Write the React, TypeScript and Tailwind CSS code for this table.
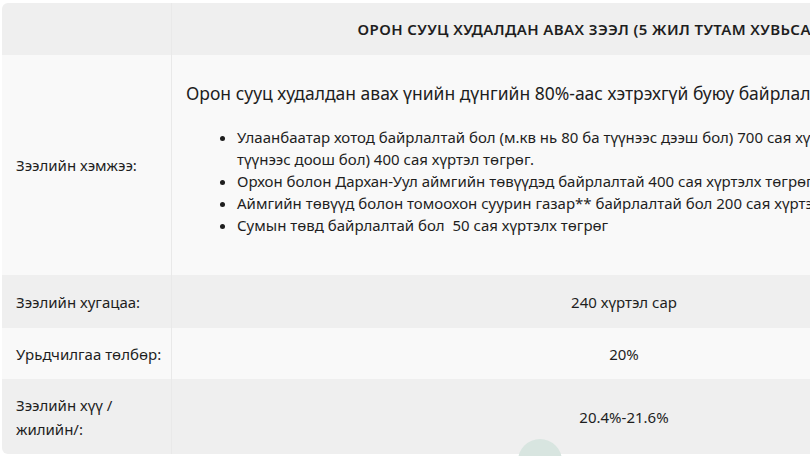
import React from "react";

const font = { fontFamily: '"Noto Sans", "Open Sans", sans-serif' };

export default function App() {
  return (
    <div className="relative w-[810px] h-[456px] overflow-hidden bg-white" style={font}>
      <div className="pl-[2px] pt-[3px]">
        <table className="w-[1074px] border-separate border-spacing-0 rounded-[6px] overflow-hidden text-[15px] text-[#1e1e1e] table-fixed">
          <colgroup>
            <col className="w-[170px]" />
            <col />
          </colgroup>
          <thead>
            <tr className="bg-[#efefef]">
              <th className="h-[52px] border-r border-[#e9e9e9]"></th>
              <th className="h-[52px] px-[14px] text-center font-semibold text-[15px] tracking-[0.4px] whitespace-nowrap">
                ОРОН СУУЦ ХУДАЛДАН АВАХ ЗЭЭЛ (5 ЖИЛ ТУТАМ ХУВЬСАХ ХҮҮТЭЙ)
              </th>
            </tr>
          </thead>
          <tbody>
            <tr className="bg-[#f9f9f9]">
              <td className="h-[220px] pl-[14px] pr-[6px] leading-6 border-r border-[#e9e9e9] align-middle whitespace-nowrap">
                Зээлийн хэмжээ:
              </td>
              <td className="h-[220px] px-[14px] align-top">
                <p className="mt-[26px] text-[17.5px] leading-6 whitespace-nowrap">
                  Орон сууц худалдан авах үнийн дүнгийн 80%-аас хэтрэхгүй буюу байрлалаас хамааран:
                </p>
                <ul className="mt-[21px] pl-[51px] list-disc leading-[22px] whitespace-nowrap">
                  <li>
                    Улаанбаатар хотод байрлалтай бол (м.кв нь 80 ба түүнээс дээш бол) 700 сая хүртэл, (м.кв нь 80 ба
                    <br />
                    түүнээс доош бол) 400 сая хүртэл төгрөг.
                  </li>
                  <li>Орхон болон Дархан-Уул аймгийн төвүүдэд байрлалтай 400 сая хүртэлх төгрөг</li>
                  <li>Аймгийн төвүүд болон томоохон суурин газар** байрлалтай бол 200 сая хүртэлх төгрөг</li>
                  <li>Сумын төвд байрлалтай бол&nbsp; 50 сая хүртэлх төгрөг</li>
                </ul>
              </td>
            </tr>
            <tr className="bg-[#efefef]">
              <td className="h-[53px] pl-[14px] pr-[6px] leading-6 border-r border-[#e9e9e9] whitespace-nowrap">Зээлийн хугацаа:</td>
              <td className="h-[53px] px-[14px] leading-6 text-center">240 хүртэл сар</td>
            </tr>
            <tr className="bg-[#f9f9f9]">
              <td className="h-[51px] pl-[14px] pr-[6px] leading-6 border-r border-[#e9e9e9] whitespace-nowrap">Урьдчилгаа төлбөр:</td>
              <td className="h-[51px] px-[14px] leading-6 text-center">20%</td>
            </tr>
            <tr className="bg-[#efefef]">
              <td className="h-[75px] pl-[14px] pr-[6px] leading-6 border-r border-[#e9e9e9]">
                Зээлийн хүү /
                <br />
                жилийн/:
              </td>
              <td className="h-[75px] px-[14px] leading-6 text-center">20.4%-21.6%</td>
            </tr>
          </tbody>
        </table>
      </div>
      <div className="absolute left-[518px] top-[439px] w-[44px] h-[44px] rounded-full bg-[#d8e5e0]" />
    </div>
  );
}
